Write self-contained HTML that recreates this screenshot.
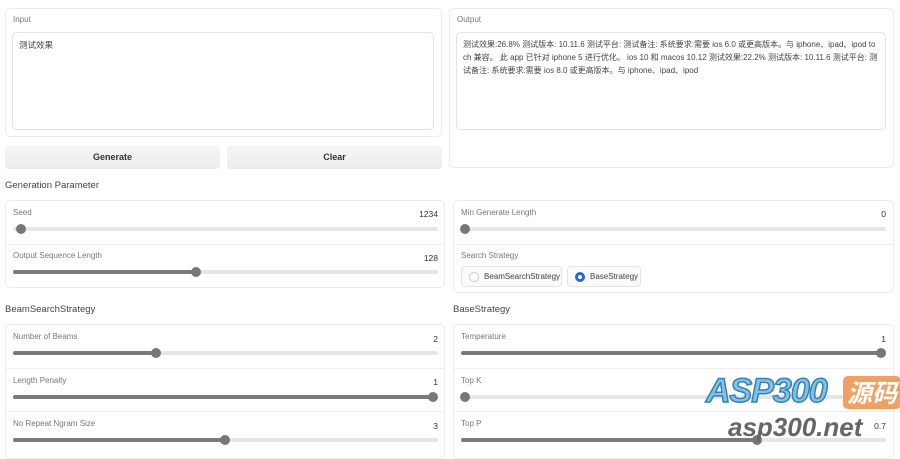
<!DOCTYPE html><html><head><meta charset="utf-8"><style>
*{box-sizing:border-box;margin:0;padding:0}
body{width:900px;height:451px;background:#fff;font-family:"Liberation Sans","Noto Sans CJK SC",sans-serif;position:relative;overflow:hidden;color:#333}
.a{position:absolute}
.panel{position:absolute;border:1px solid #ececec;border-radius:5px;background:#fff}
.lbl{position:absolute;font-size:8px;color:#777}
.ta{position:absolute;border:1px solid #e3e3e3;border-radius:5px;background:#fff;font-size:8.5px;color:#444;padding:6px 6px;line-height:13px}
.btn{position:absolute;background:linear-gradient(#f6f6f7,#ececee);border-radius:4px;font-size:9px;font-weight:bold;color:#333;text-align:center;line-height:24px}
.h{position:absolute;font-size:9.5px;color:#444}
.val{position:absolute;font-size:8.5px;color:#333;text-align:right}
.tr{position:absolute;height:4px;border-radius:2px;background:#e6e6e6}
.fl{position:absolute;height:4px;border-radius:2px;background:#7a7a7a}
.th{position:absolute;width:10px;height:10px;border-radius:50%;background:#777}
.sep{position:absolute;height:1px;background:#eee}
.radio{position:absolute;border:1px solid #e5e5e5;border-radius:4px;background:#fafafa;font-size:8px;color:#444;line-height:20px;padding-left:22px}
.radio i{position:absolute;left:7px;top:5px;width:10px;height:10px;border-radius:50%;border:1px solid #ccc;background:#fff}
</style></head><body>
<div class="panel" style="left:5px;top:8px;width:437px;height:129px"></div>
<div class="lbl" style="left:13px;top:15px">Input</div>
<div class="ta" style="left:12px;top:32px;width:422px;height:98px">测试效果</div>
<div class="btn" style="left:5px;top:145px;width:215px;height:24px">Generate</div>
<div class="btn" style="left:227px;top:145px;width:215px;height:24px">Clear</div>
<div class="panel" style="left:449px;top:8px;width:445px;height:160px"></div>
<div class="lbl" style="left:457px;top:15px">Output</div>
<div class="ta" style="left:456px;top:32px;width:430px;height:98px;font-size:8px;padding:5px 6px">测试效果:26.8% 测试版本: 10.11.6 测试平台: 测试备注: 系统要求:需要 ios 6.0 或更高版本。与 iphone、ipad、ipod to ch 兼容。 此 app 已针对 iphone 5 进行优化。 ios 10 和 macos 10.12 测试效果:22.2% 测试版本: 10.11.6 测试平台: 测试备注: 系统要求:需要 ios 8.0 或更高版本。与 iphone、ipad、ipod</div>
<div class="h" style="left:5px;top:180px">Generation Parameter</div>

<div class="panel" style="left:5px;top:200px;width:440px;height:88px"></div>
<div class="sep" style="left:6px;top:244px;width:438px"></div>
<div class="lbl" style="left:13px;top:208px">Seed</div><div class="val" style="left:380px;top:209px;width:58px">1234</div>
<div class="tr" style="left:13px;top:227px;width:425px"></div><div class="th" style="left:16px;top:224px"></div>
<div class="lbl" style="left:13px;top:251px">Output Sequence Length</div><div class="val" style="left:380px;top:253px;width:58px">128</div>
<div class="tr" style="left:13px;top:270px;width:425px"></div><div class="fl" style="left:13px;top:270px;width:183px"></div><div class="th" style="left:191px;top:267px"></div>

<div class="panel" style="left:453px;top:200px;width:441px;height:93px"></div>
<div class="sep" style="left:454px;top:244px;width:439px"></div>
<div class="lbl" style="left:461px;top:208px">Min Generate Length</div><div class="val" style="left:828px;top:209px;width:58px">0</div>
<div class="tr" style="left:461px;top:227px;width:425px"></div><div class="th" style="left:460px;top:224px"></div>
<div class="lbl" style="left:461px;top:251px">Search Strategy</div>
<div class="radio" style="left:461px;top:266px;width:101px;height:21px"><i></i>BeamSearchStrategy</div>
<div class="radio" style="left:567px;top:266px;width:74px;height:21px"><i style="border:3px solid #2563eb"></i>BaseStrategy</div>

<div class="h" style="left:5px;top:304px">BeamSearchStrategy</div>
<div class="h" style="left:453px;top:304px">BaseStrategy</div>

<div class="panel" style="left:5px;top:324px;width:440px;height:135px"></div>
<div class="sep" style="left:6px;top:368px;width:438px"></div><div class="sep" style="left:6px;top:411px;width:438px"></div>
<div class="lbl" style="left:13px;top:332px">Number of Beams</div><div class="val" style="left:380px;top:334px;width:58px">2</div>
<div class="tr" style="left:13px;top:351px;width:425px"></div><div class="fl" style="left:13px;top:351px;width:143px"></div><div class="th" style="left:151px;top:348px"></div>
<div class="lbl" style="left:13px;top:376px">Length Penalty</div><div class="val" style="left:380px;top:377px;width:58px">1</div>
<div class="tr" style="left:13px;top:395px;width:425px"></div><div class="fl" style="left:13px;top:395px;width:423px"></div><div class="th" style="left:428px;top:392px"></div>
<div class="lbl" style="left:13px;top:419px">No Repeat Ngram Size</div><div class="val" style="left:380px;top:421px;width:58px">3</div>
<div class="tr" style="left:13px;top:438px;width:425px"></div><div class="fl" style="left:13px;top:438px;width:212px"></div><div class="th" style="left:220px;top:435px"></div>

<div class="panel" style="left:453px;top:324px;width:441px;height:135px"></div>
<div class="sep" style="left:454px;top:368px;width:439px"></div><div class="sep" style="left:454px;top:411px;width:439px"></div>
<div class="lbl" style="left:461px;top:332px">Temperature</div><div class="val" style="left:828px;top:334px;width:58px">1</div>
<div class="tr" style="left:461px;top:351px;width:425px"></div><div class="fl" style="left:461px;top:351px;width:423px"></div><div class="th" style="left:876px;top:348px"></div>
<div class="lbl" style="left:461px;top:376px">Top K</div><div class="val" style="left:828px;top:377px;width:58px">0</div>
<div class="tr" style="left:461px;top:395px;width:425px"></div><div class="th" style="left:460px;top:392px"></div>
<div class="lbl" style="left:461px;top:419px">Top P</div><div class="val" style="left:828px;top:421px;width:58px">0.7</div>
<div class="tr" style="left:461px;top:438px;width:425px"></div><div class="fl" style="left:461px;top:438px;width:296px"></div><div class="th" style="left:752px;top:435px"></div>

<div class="a" style="left:706px;top:372px;font:italic bold 34px 'Liberation Sans',sans-serif;color:#7cc4ec;-webkit-text-stroke:1.5px #3a7fb0;letter-spacing:-1px">ASP300</div>
<div class="a" style="left:843px;top:376px;width:58px;height:33px;background:#f0a060;border-radius:5px;color:#fff;font:italic bold 25px 'Noto Sans CJK SC',sans-serif;line-height:33px;text-align:center">源码</div>
<div class="a" style="left:728px;top:412px;font:italic bold 26px 'Liberation Sans',sans-serif;color:#666">asp300.net</div>
</body></html>
